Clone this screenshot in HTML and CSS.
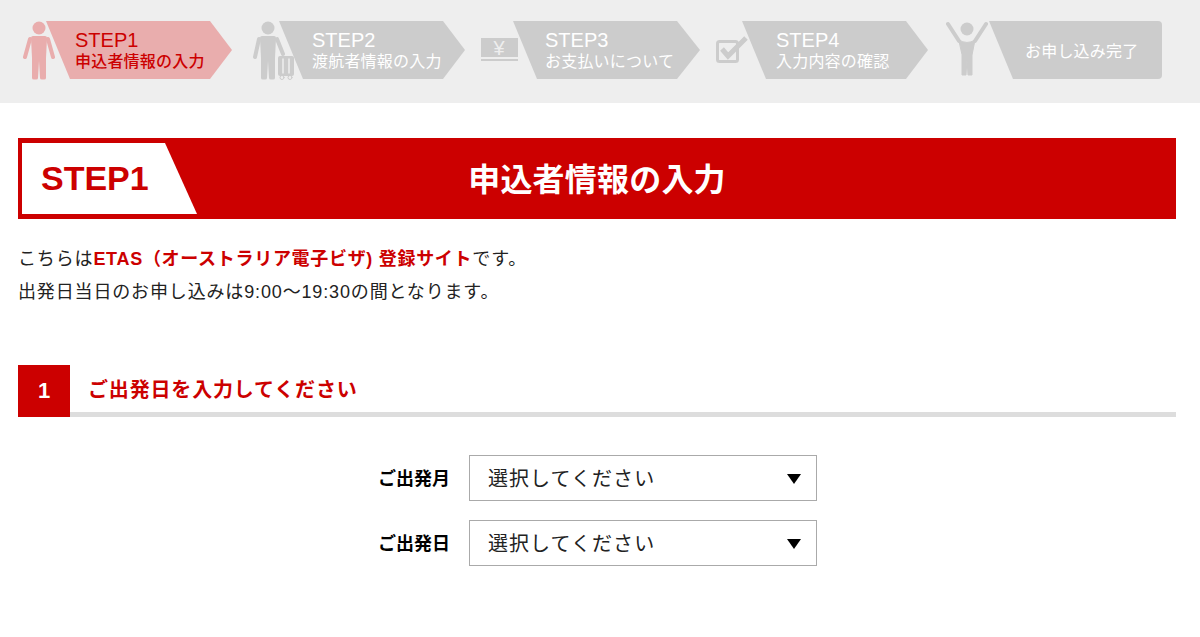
FILE: index.html
```html
<!DOCTYPE html>
<html lang="ja">
<head>
    <meta charset="UTF-8">
    <meta name="viewport" content="width=device-width, initial-scale=1.0">
    <title>申込者情報の入力</title>
    <link rel="stylesheet" href="styles.css">
</head>
<body>
    <header class="steps">
        <div class="step step-current">
            <svg class="step-icon icon-1" viewBox="0 0 32 59" fill="#e9adad" stroke="#e9adad" stroke-linecap="round">
                <circle cx="16" cy="7" r="6.5" stroke="none"/>
                <path d="M10 15h12q2 0 2 2l-1 20v20q0 1.5-2 1.500h-2q-2 0-2-1.500l-1-17-1 17q0 1.500-2 1.500h-2q-2 0-2-1.500V37L8 17q0-2 2-2z" stroke="none"/>
                <path d="M7 18 2 36M25 18l5 18" stroke-width="4" fill="none"/>
            </svg>
            <div class="arrow arrow-1">
                <span class="arrow-title">STEP1</span>
                <span class="arrow-sub">申込者情報の入力</span>
            </div>
        </div>
        <div class="step">
            <svg class="step-icon icon-2" viewBox="0 0 43 59" fill="#ccc" stroke="#ccc" stroke-linecap="round">
                <circle cx="16" cy="7" r="6.5" stroke="none"/>
                <path d="M10 15h12q2 0 2 2l-1 20v20q0 1.5-2 1.500h-2q-2 0-2-1.500l-1-17-1 17q0 1.500-2 1.500h-2q-2 0-2-1.500V37L8 17q0-2 2-2z" stroke="none"/>
                <path d="M7 18 3 36M25 18l6 15" stroke-width="4" fill="none"/>
                <rect x="26" y="35" width="16" height="20" rx="2" stroke="none"/>
                <path d="M31 38v14M37 38v14" stroke="#eee" stroke-width="1.5"/>
                <circle cx="30" cy="56.5" r="2" fill="none" stroke-width="1"/>
                <circle cx="38" cy="56.5" r="2" fill="none" stroke-width="1"/>
            </svg>
            <div class="arrow arrow-2">
                <span class="arrow-title">STEP2</span>
                <span class="arrow-sub">渡航者情報の入力</span>
            </div>
        </div>
        <div class="step">
            <svg class="step-icon icon-3" viewBox="0 0 38 59" fill="#ccc">
                <rect x="1" y="17" width="37" height="19"/>
                <rect x="1" y="38" width="37" height="2"/>
                <text class="yen" x="19" y="34" text-anchor="middle">¥</text>
            </svg>
            <div class="arrow arrow-3">
                <span class="arrow-title">STEP3</span>
                <span class="arrow-sub">お支払いについて</span>
            </div>
        </div>
        <div class="step">
            <svg class="step-icon icon-4" viewBox="0 0 32 59" fill="none" stroke="#ccc">
                <rect x="1.5" y="20.5" width="20" height="20" rx="2" stroke-width="3"/>
                <path d="M6 28l6 7L30 17" stroke-width="5"/>
            </svg>
            <div class="arrow arrow-4">
                <span class="arrow-title">STEP4</span>
                <span class="arrow-sub">入力内容の確認</span>
            </div>
        </div>
        <div class="step">
            <svg class="step-icon icon-5" viewBox="0 0 42 59" fill="#ccc" stroke="#ccc" stroke-linecap="round">
                <circle cx="21" cy="8" r="6.5" stroke="none"/>
                <path d="M2 3l11 17M40 3 29 20" stroke-width="4" fill="none"/>
                <path d="M13 19q8 5 16 0l-3 15v20h-4l-1-16-1 16h-4V34z" stroke-width="1"/>
            </svg>
            <div class="arrow arrow-5">
                <span class="arrow-sub">お申し込み完了</span>
            </div>
        </div>
    </header>

    <main class="container">
        <div class="title-bar">
            <div class="title-badge">STEP1</div>
            <h1>申込者情報の入力</h1>
        </div>

        <p class="lead">
            こちらは<strong>ETAS（オーストラリア電子ビザ) 登録サイト</strong>です。<br>
            出発日当日のお申し込みは9:00〜19:30の間となります。
        </p>

        <div class="section-head">
            <span class="section-num">1</span>
            <h2>ご出発日を入力してください</h2>
        </div>

        <form class="date-form">
            <div class="form-row">
                <label for="month">ご出発月</label>
                <div class="select-wrap">
                    <select id="month" name="month">
                        <option>選択してください</option>
                    </select>
                </div>
            </div>
            <div class="form-row">
                <label for="day">ご出発日</label>
                <div class="select-wrap">
                    <select id="day" name="day">
                        <option>選択してください</option>
                    </select>
                </div>
            </div>
        </form>
    </main>
</body>
</html>
```

FILE: styles.css
```css
body {
    margin: 0;
    background-color: white;
    color: #000;
    font-family: "Liberation Sans", "Noto Sans CJK JP", sans-serif;
}

/* ステップ表示 */
.steps {
    display: flex;
    height: 103px;
    box-sizing: border-box;
    padding: 21px 0 0 23px;
    background-color: #eee;
}
.step {
    display: flex;
    height: 58px;
}
.step-icon {
    flex: none;
    height: 59px;
}
.icon-1 { width: 32px; margin-right: -9px; }
.icon-2 { width: 43px; margin: 0 -16px 0 20px; }
.icon-3 { width: 38px; margin: 0 -5px 0 15px; }
.icon-4 { width: 32px; margin: 0 -6px 0 16px; }
.icon-5 { width: 42px; margin: 0 1px 0 18px; }
.yen {
    fill: #eee;
    font-size: 20px;
}
.arrow {
    display: flex;
    flex-direction: column;
    justify-content: center;
    box-sizing: border-box;
    width: 186px;
    height: 58px;
    padding-top: 2px;
    background-color: #ccc;
    color: white;
    clip-path: polygon(0 0, 164px 0, 100% 50%, 164px 100%, 24px 100%);
}
.arrow-1 { padding-left: 29px; background-color: #e9adad; color: #c00; }
.arrow-2 { padding-left: 33px; }
.arrow-3 { padding-left: 32px; width: 187px; }
.arrow-4 { padding-left: 34px; }
.arrow-5 {
    width: 173px;
    padding-left: 36px;
    border-radius: 0 4px 4px 0;
    clip-path: polygon(0 0, 100% 0, 100% 100%, 24px 100%);
}
.arrow-title {
    font-size: 20px;
    line-height: 21px;
}
.arrow-sub {
    font-size: 16px;
    letter-spacing: 0.2px;
    line-height: 21px;
}
.arrow-1 .arrow-sub {
    font-weight: 500;
}

/* 本文 */
.container {
    padding: 35px 24px 0 18px;
}
.title-bar {
    display: grid;
    align-items: center;
    height: 81px;
    box-sizing: border-box;
    padding: 5px 4px;
    background-color: #c00;
}
.title-badge, .title-bar h1 {
    grid-area: 1 / 1;
}
.title-badge {
    justify-self: start;
    box-sizing: border-box;
    width: 175px;
    height: 71px;
    padding-left: 19px;
    background-color: white;
    color: #c00;
    font-size: 34px;
    font-weight: bold;
    line-height: 71px;
    clip-path: polygon(0 0, 143px 0, 100% 100%, 0 100%);
}
.title-bar h1 {
    justify-self: center;
    margin: 0 0 4px;
    color: white;
    font-size: 32px;
    font-weight: bold;
    letter-spacing: 0.2px;
}
.lead {
    margin: 24px 0 56px;
    color: #222;
    font-size: 18px;
    letter-spacing: 0.85px;
    line-height: 33px;
}
.lead strong {
    color: #c00;
    font-weight: bold;
    letter-spacing: 0.7px;
}
.section-head {
    display: flex;
    align-items: center;
    height: 47px;
    border-bottom: 5px solid #ddd;
}
.section-num {
    flex: none;
    align-self: flex-start;
    width: 52px;
    height: 52px;
    background-color: #c00;
    color: white;
    font-size: 22px;
    font-weight: bold;
    line-height: 52px;
    text-align: center;
}
.section-head h2 {
    margin: 0 0 0 18px;
    color: #c00;
    font-size: 20px;
    font-weight: bold;
    letter-spacing: 0.83px;
}

/* フォーム */
.date-form {
    display: flex;
    flex-direction: column;
    gap: 19px;
    margin-top: 38px;
}
.form-row {
    display: flex;
    align-items: center;
    gap: 19px;
}
.form-row label {
    width: 432px;
    margin-bottom: 2px;
    font-size: 18px;
    font-weight: bold;
    text-align: right;
}
.select-wrap {
    position: relative;
    width: 348px;
    height: 46px;
}
.select-wrap::after {
    content: "";
    position: absolute;
    top: 19px;
    right: 16px;
    border-top: 10px solid #000;
    border-left: 7px solid transparent;
    border-right: 7px solid transparent;
}
select {
    width: 100%;
    height: 100%;
    box-sizing: border-box;
    padding: 2px 0 0 18px;
    border: 1px solid #aaa;
    border-radius: 0;
    background-color: white;
    color: #222;
    font-family: inherit;
    font-size: 20px;
    letter-spacing: 1.05px;
    appearance: none;
}
```
